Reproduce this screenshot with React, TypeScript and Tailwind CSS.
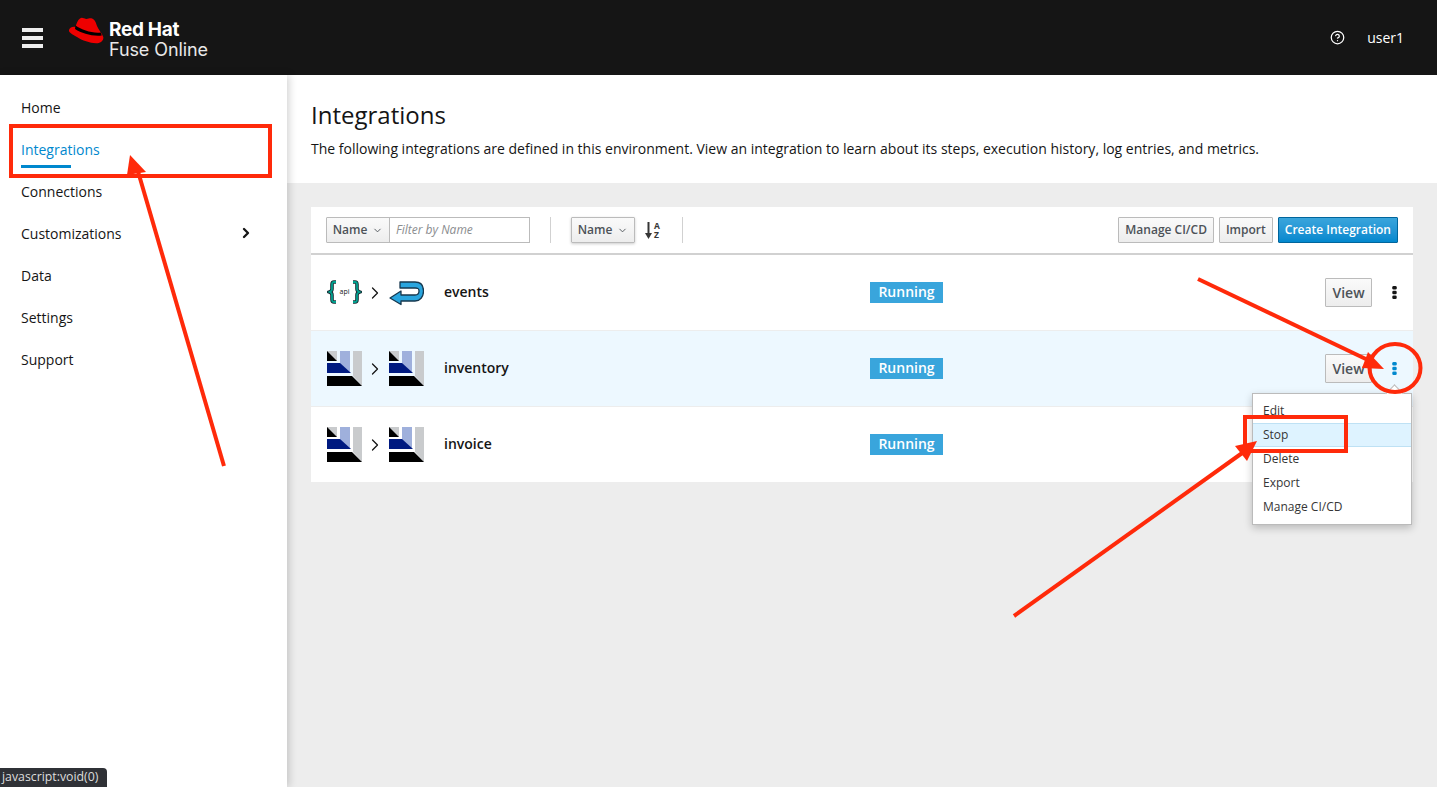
import { ChevronDown, ChevronRight, CircleHelp } from "lucide-react";

const navItems = ["Home", "Integrations", "Connections", "Customizations", "Data", "Settings", "Support"];
const menuItems = ["Edit", "Stop", "Delete", "Export", "Manage CI/CD"];

function RedHatLogo() {
  return (
    <svg width="36" height="30" viewBox="0 0 36 30" className="shrink-0">
      <path
        d="M12 2.500C14 1 16 2.500 18 3c2 .2 4-1.200 6-.5 3 1 4 4.500 5 7.500 1 3 4.500 6.500 6.300 11 .5 3.500-2.800 6.500-7.300 6.300C22 27 14 24.500 9 21 4 18 .5 16.500 1 14c1-3 4-3.500 6.500-3 1-3 2-7 4.500-8.500z"
        fill="#ee0000"
      />
      <path d="M7.500 9.500C14 14 24 17.500 32.800 16.500l1 3C24 20.500 14 17.500 7 13z" fill="#000000" />
    </svg>
  );
}

function ApiIcon() {
  const left = "M9 2H7C5.500 2 5 3 5 4.500V9c0 1.500-1 2.500-2.500 3C4 12.500 5 13.500 5 15v4.500C5 21 5.500 22 7 22h2";
  const right = "M26 2h2c1.500 0 2 1 2 2.500V9c0 1.500 1 2.500 2.500 3-1.500.5-2.500 1.500-2.500 3v4.500c0 1.500-.5 2.500-2 2.500h-2";
  return (
    <div className="relative flex h-[35px] w-[35px] items-center justify-center">
      <svg width="35" height="24" viewBox="0 0 35 24" className="absolute left-0 top-[5px]" fill="none">
        <path d={left} stroke="#1d2b33" strokeWidth="3.600" />
        <path d={left} stroke="#00a08e" strokeWidth="1.800" />
        <path d={right} stroke="#1d2b33" strokeWidth="3.600" />
        <path d={right} stroke="#00a08e" strokeWidth="1.800" />
      </svg>
      <span className="mb-[2px] text-[7px] leading-none text-[#151515]">api</span>
    </div>
  );
}

function ReturnIcon() {
  return (
    <svg width="35" height="26" viewBox="0 0 35 26" fill="none">
      <path
        d="M1 18l11-7v4h14c3 0 4-1.500 4-4s-1-3-4-3H11V2h15c6 0 8.500 4 8.500 9 0 6-3.500 10-8.500 10H12v3.500z"
        fill="#29a5de"
        stroke="#16384f"
        strokeWidth="1.300"
        strokeLinejoin="round"
      />
    </svg>
  );
}

function MapperIcon() {
  return (
    <svg width="35" height="35" viewBox="0 0 35 35">
      <rect x="0" y="0" width="10" height="10" fill="#c9cbcd" />
      <polygon points="0,0 0,10 10,10" fill="#000000" />
      <rect x="13" y="0" width="10" height="22" fill="#9fb0dc" />
      <polygon points="0,12 13,12 24,22 0,22" fill="#001a80" />
      <polygon points="26,0 35,0 35,35 26,25" fill="#c9cbcd" />
      <polygon points="0,25 25,25 35,35 0,35" fill="#000000" />
    </svg>
  );
}

function KebabIcon({ color }: { color: string }) {
  return (
    <svg width="5" height="13" viewBox="0 0 5 13" fill={color}>
      <rect x="0.300" y="0" width="4.400" height="3.500" rx="1.300" />
      <rect x="0.300" y="4.700" width="4.400" height="3.500" rx="1.300" />
      <rect x="0.300" y="9.500" width="4.400" height="3.500" rx="1.300" />
    </svg>
  );
}

function SortIcon() {
  return (
    <div className="flex w-[17px] items-center gap-[2px] text-[#363636]">
      <svg width="7" height="17" viewBox="0 0 7 17" fill="currentColor">
        <rect x="2.500" y="0" width="2" height="13" />
        <polygon points="0,11 7,11 3.500,17" />
      </svg>
      <div className="flex flex-col text-[8.500px] font-bold leading-[9px]">
        <span>A</span>
        <span>Z</span>
      </div>
    </div>
  );
}

function ToolbarButton({ label, primary }: { label: string; primary?: boolean }) {
  if (primary) {
    return (
      <button className="h-[26px] rounded-[1px] border border-[#00659c] bg-gradient-to-b from-[#39a5dc] to-[#0088ce] px-[6px] text-[12px] font-semibold text-white">
        {label}
      </button>
    );
  }
  return (
    <button className="h-[26px] rounded-[1px] border border-[#bbbbbb] bg-gradient-to-b from-[#fafafa] to-[#ededed] px-[6px] text-[12px] font-semibold text-[#4d5258]">
      {label}
    </button>
  );
}

function Row({
  name,
  active,
  from,
  to,
  menu,
}: {
  name: string;
  active?: boolean;
  from: React.ReactNode;
  to: React.ReactNode;
  menu?: boolean;
}) {
  return (
    <div
      className={`relative flex h-[76px] items-center border-b border-[#ededed] pl-[16px] pr-[16px] ${
        active ? "bg-[#edf8ff]" : "bg-white"
      }`}
    >
      <div className="flex w-[117px] items-center">
        {from}
        <ChevronRight className="ml-[3px] mr-[4px] h-[20px] w-[20px] text-[#151515]" strokeWidth={1.5} />
        {to}
      </div>
      <div className="w-[426px] pb-[2px] text-[14px] font-semibold text-[#151515]">{name}</div>
      <div className="flex h-[21px] w-[73px] items-center justify-center bg-[#39a5dc] pb-[2px] text-[14px] font-semibold text-white">
        Running
      </div>
      <div className="ml-auto flex items-center gap-[20px]">
        <button className="h-[29px] w-[47px] rounded-[1px] border border-[#bbbbbb] bg-gradient-to-b from-[#fafafa] to-[#ededed] text-[14px] font-semibold text-[#4d5258]">
          View
        </button>
        <KebabIcon color={active ? "#0088ce" : "#151515"} />
      </div>
      {menu && (
        <div className="absolute right-[1px] top-[62px] z-10 w-[160px] border border-[#bbbbbb] bg-white py-[5px] text-[12px] text-[#363636] shadow-[0_3px_8px_rgba(0,0,0,0.22)]">
          <div className="absolute -top-[7px] right-[10px] h-[13px] w-[13px] rotate-45 border-l border-t border-[#bbbbbb] bg-white" />
          <div className="relative">
            {menuItems.map((item) => (
              <div
                key={item}
                className={`flex h-[24px] items-center px-[10px] ${
                  item === "Stop" ? "border-y border-[#bee1f4] bg-[#def3ff]" : ""
                }`}
              >
                {item}
              </div>
            ))}
          </div>
        </div>
      )}
    </div>
  );
}

export default function App() {
  return (
    <div className="relative flex h-[787px] w-[1437px] flex-col overflow-hidden bg-white font-['Open_Sans',sans-serif] text-[#151515]">
      <header className="flex h-[75px] shrink-0 items-center bg-[#151515] pl-[22px] pr-[33px] text-white">
        <div className="flex w-[21px] flex-col gap-[4px]">
          <div className="h-[4px] bg-[#ededed]" />
          <div className="h-[4px] bg-[#ededed]" />
          <div className="h-[4px] bg-[#ededed]" />
        </div>
        <div className="mb-[13px] ml-[25px]">
          <RedHatLogo />
        </div>
        <div className="ml-[5px] mt-[5px] font-['Inter',sans-serif] leading-[20px]">
          <div className="text-[19px] font-bold tracking-[-0.3px]">Red Hat</div>
          <div className="text-[18px] tracking-[-0.1px] text-[#e8e8e8]">Fuse Online</div>
        </div>
        <CircleHelp className="ml-auto h-[15px] w-[15px]" />
        <span className="ml-[22px] text-[14px] text-white">user1</span>
      </header>

      <div className="flex min-h-0 flex-1">
        <nav className="z-[1] flex w-[287px] shrink-0 flex-col bg-white pr-[33px] pt-[11px] shadow-[2px_0_8px_rgba(0,0,0,0.18)]">
          {navItems.map((item) => (
            <div key={item} className="relative flex h-[42px] items-center justify-between pl-[21px] text-[14px]">
              <span className={item === "Integrations" ? "text-[#0088ce]" : "text-[#151515]"}>{item}</span>
              {item === "Customizations" && <ChevronRight className="h-[16px] w-[16px]" strokeWidth={3.5} />}
              {item === "Integrations" && <div className="absolute bottom-[2px] left-[21px] h-[3px] w-[50px] bg-[#0088ce]" />}
            </div>
          ))}
        </nav>

        <main className="flex min-w-0 flex-1 flex-col bg-[#ededed]">
          <div className="h-[108px] shrink-0 bg-white pl-[24px] pt-[22px]">
            <h1 className="text-[24px] leading-[36px] text-[#151515]">Integrations</h1>
            <p className="mt-[6px] text-[14px] leading-[20px] text-[#151515]">
              The following integrations are defined in this environment. View an integration to learn about its steps,
              execution history, log entries, and metrics.
            </p>
          </div>

          <div className="mx-[24px] mt-[24px]">
            <div className="flex h-[48px] items-start border-b-2 border-[#d1d1d1] bg-white px-[15px] pt-[10px]">
              <button className="flex h-[26px] w-[64px] items-center justify-center gap-[5px] rounded-[1px] border border-[#bbbbbb] bg-gradient-to-b from-[#fafafa] to-[#ededed] text-[12px] font-semibold text-[#4d5258]">
                Name <ChevronDown className="h-[11px] w-[11px]" />
              </button>
              <div className="ml-[-1px] flex h-[26px] w-[141px] items-center border border-[#bbbbbb] bg-white pl-[6px] text-[12px] italic text-[#8b8d8f]">
                Filter by Name
              </div>
              <div className="ml-[20px] h-[26px] w-px bg-[#d1d1d1]" />
              <button className="ml-[20px] flex h-[26px] w-[64px] items-center justify-center gap-[5px] rounded-[1px] border border-[#bbbbbb] bg-gradient-to-b from-[#fafafa] to-[#ededed] text-[12px] font-semibold text-[#4d5258] shadow-[0_1px_3px_rgba(0,0,0,0.2)]">
                Name <ChevronDown className="h-[11px] w-[11px]" />
              </button>
              <div className="ml-[10px] flex h-[26px] items-center">
                <SortIcon />
              </div>
              <div className="ml-[20px] h-[26px] w-px bg-[#d1d1d1]" />
              <div className="ml-auto flex gap-[5px]">
                <ToolbarButton label="Manage CI/CD" />
                <ToolbarButton label="Import" />
                <ToolbarButton label="Create Integration" primary />
              </div>
            </div>
            <Row name="events" from={<ApiIcon />} to={<ReturnIcon />} />
            <Row name="inventory" active from={<MapperIcon />} to={<MapperIcon />} menu />
            <Row name="invoice" from={<MapperIcon />} to={<MapperIcon />} />
          </div>
        </main>
      </div>

      {/* hover status bar */}
      <div className="absolute bottom-0 left-0 z-20 flex h-[19px] w-[107px] items-center rounded-tr-[4px] bg-[#2f3136] pl-[2px] text-[12.300px] text-[#dddddd]">
        javascript:void(0)
      </div>

      {/* red annotations drawn over the shot */}
      <div className="absolute left-[9px] top-[124px] z-20 h-[54px] w-[263px] border-[4px] border-[#ff2a0a]" />
      <div className="absolute left-[1243px] top-[415px] z-20 h-[38px] w-[105px] border-[4px] border-[#ff2a0a]" />
      <svg width="1437" height="787" viewBox="0 0 1437 787" className="pointer-events-none absolute left-0 top-0 z-20" fill="none">
        <ellipse cx="1395" cy="368" rx="25.500" ry="24" stroke="#ff2a0a" strokeWidth="4" />
        <line x1="224" y1="466" x2="137" y2="168" stroke="#ff2a0a" strokeWidth="4" />
        <polygon points="130,155 146,172 127,175" fill="#ff2a0a" />
        <line x1="1198" y1="279" x2="1370" y2="361" stroke="#ff2a0a" strokeWidth="4" />
        <polygon points="1384,369 1362,368 1368,352" fill="#ff2a0a" />
        <line x1="1014" y1="616" x2="1245" y2="451" stroke="#ff2a0a" strokeWidth="4" />
        <polygon points="1257,441 1235,446 1247,461" fill="#ff2a0a" />
      </svg>
    </div>
  );
}
